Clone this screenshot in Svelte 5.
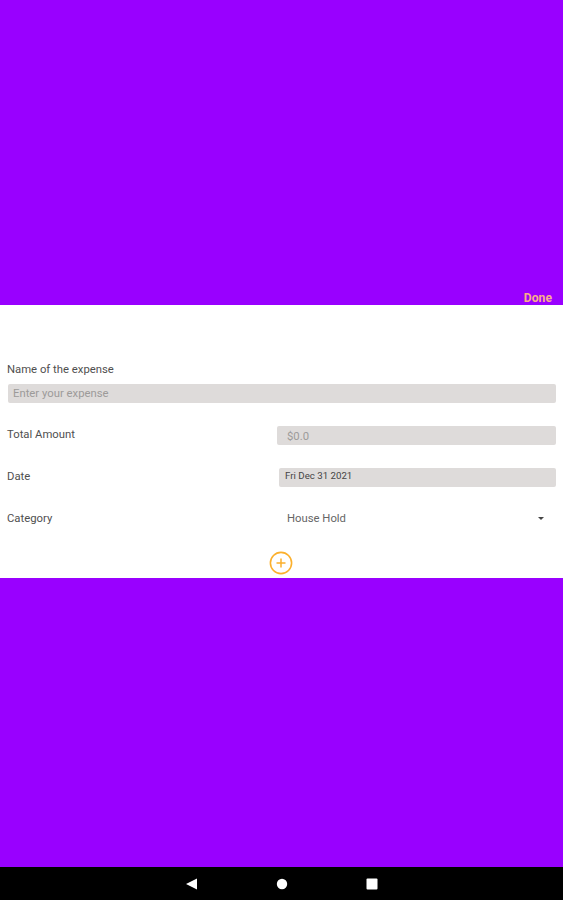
<script lang="ts">
  const fields = [
    { label: 'Total Amount', value: '$0.0', kind: 'amount' },
    { label: 'Date', value: 'Fri Dec 31 2021', kind: 'date' }
  ];
</script>

<div class="page">
  <div class="band top">
    <span class="done">Done</span>
  </div>

  <section class="sheet">
    <div class="name">
      <div class="label">Name of the expense</div>
      <div class="input placeholder wide">Enter your expense</div>
    </div>

    {#each fields as f}
      <div class="row {f.kind}">
        <div class="label">{f.label}</div>
        <div class="input {f.kind}-input">{f.value}</div>
      </div>
    {/each}

    <div class="row category">
      <div class="label">Category</div>
      <div class="select">
        <span>House Hold</span>
        <span class="caret"></span>
      </div>
    </div>

    <div class="add">
      <svg width="24" height="24" viewBox="0 0 24 24" fill="none" stroke="#fbb02d">
        <circle cx="12" cy="12" r="10.6" stroke-width="1.6" />
        <path d="M12 7.5v9M7.5 12h9" stroke-width="1.5" />
      </svg>
    </div>
  </section>

  <div class="band bottom"></div>

  <nav class="navbar">
    <svg width="13" height="12" viewBox="0 0 13 12"><path d="M12 .5v11L1 6z" fill="#fff" /></svg>
    <svg width="12" height="12" viewBox="0 0 12 12"><circle cx="6" cy="6" r="5.2" fill="#fff" /></svg>
    <svg width="12" height="12" viewBox="0 0 12 12"><rect x="0.5" y="0.5" width="11" height="11" rx="1" fill="#fff" /></svg>
  </nav>
</div>

<style>
  :global(body) {
    margin: 0;
    background: #fff;
  }

  .page {
    display: flex;
    flex-direction: column;
    height: 900px;
    font-family: Roboto, "Liberation Sans", sans-serif;
    font-size: 11.3px;
    color: #555;
  }

  .band {
    background: #9900ff;
  }

  .top {
    height: 305px;
    box-sizing: border-box;
    display: flex;
    align-items: flex-end;
    justify-content: flex-end;
    padding: 0 11px 0 0;
  }

  .done {
    font-size: 12.2px;
    font-weight: 700;
    line-height: 14px;
    color: #f9ae8a;
  }

  .bottom {
    flex: 1;
  }

  .sheet {
    height: 273px;
    box-sizing: border-box;
    background: #fff;
    padding: 58px 7px 0 7px;
    display: flex;
    flex-direction: column;
  }

  .label {
    line-height: 14px;
    color: #4f4f4f;
  }

  .name .label {
    margin-bottom: 7px;
  }

  .input {
    height: 19px;
    line-height: 20px;
    background: #dedbda;
    border-radius: 2px;
    box-sizing: border-box;
    color: #9c9a99;
  }

  .wide {
    margin-left: 1px;
    padding-left: 5px;
  }

  .row {
    display: flex;
    align-items: center;
    justify-content: space-between;
    height: 19px;
    margin-top: 23px;
  }

  .row .label {
    margin-top: -2px;
  }

  .amount-input {
    width: 279px;
    padding-left: 10px;
    line-height: 21px;
  }

  .date-input {
    width: 277px;
    padding-left: 6px;
    font-size: 9.7px;
    line-height: 15px;
    color: #444;
  }

  .category .label {
    margin-top: -1px;
  }

  .select {
    width: 269px;
    display: flex;
    align-items: center;
    justify-content: space-between;
    padding-right: 12px;
    box-sizing: border-box;
    color: #666;
    margin-top: -3px;
  }

  .caret {
    width: 0;
    height: 0;
    border-left: 3px solid transparent;
    border-right: 3px solid transparent;
    border-top: 3px solid #444;
  }

  .add {
    display: flex;
    justify-content: center;
    margin-top: 22px;
    padding-right: 1px;
  }

  .add svg {
    display: block;
  }

  .navbar {
    height: 33px;
    background: #000;
    display: flex;
    align-items: center;
    justify-content: center;
    gap: 78px;
  }
</style>
